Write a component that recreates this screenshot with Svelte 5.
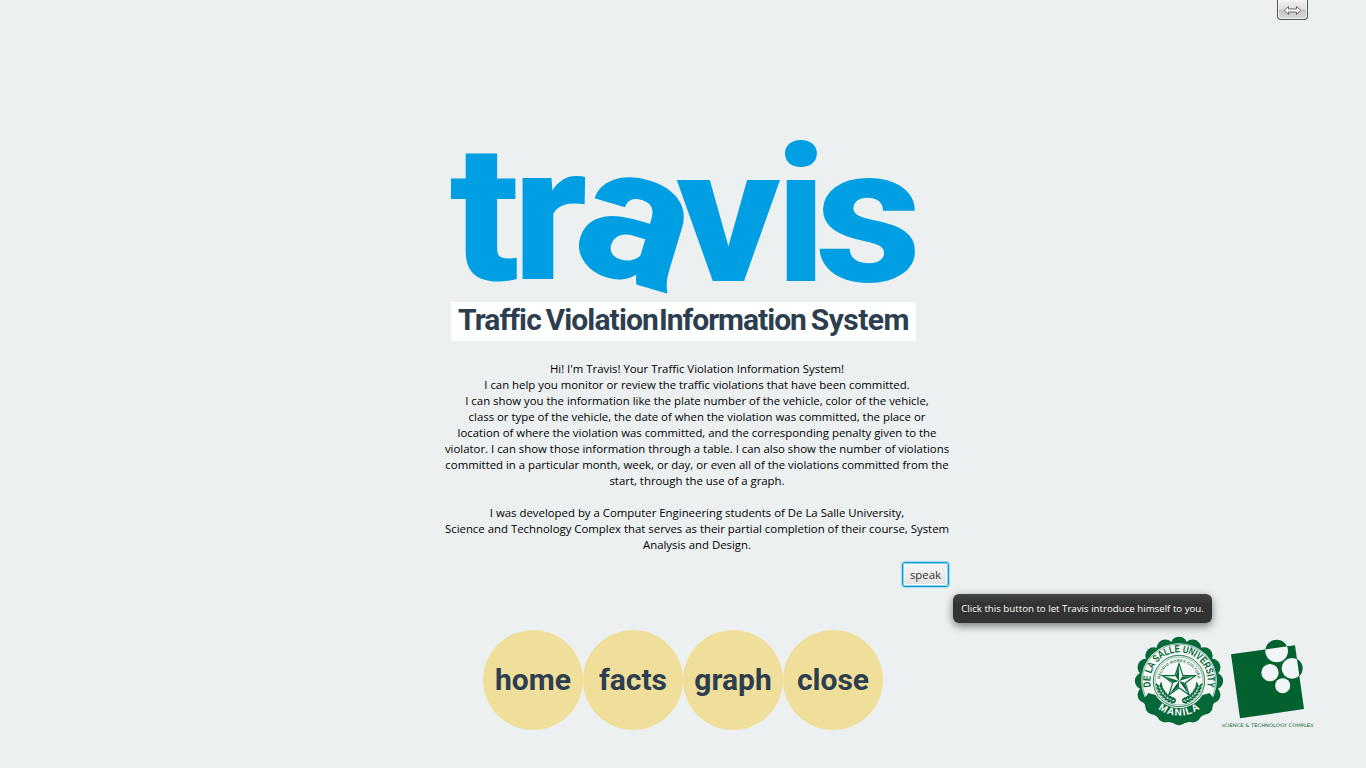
<script>
  const letters = [
    { ch: 't', t: 'translate(449.8 279.5) scale(1.07 1)' },
    { ch: 'r', t: 'translate(512.3 279) scale(1.05 1)' },
    { ch: 'a', t: 'translate(566.5 263.5) rotate(16.7) scale(1.08 1)' },
    { ch: 'v', t: 'translate(676 281) scale(1.07 1)' },
    { ch: 'i', t: 'translate(774.3 281) scale(1.05 1)' },
    { ch: 's', t: 'translate(815 281) scale(1.085 1)' }
  ];
  const title = [
    { word: 'Traffic', ls: -0.9, gap: 0 },
    { word: 'Violation', ls: -0.87, gap: 4.6 },
    { word: 'Information', ls: -1.02, gap: 1 },
    { word: 'System', ls: -0.5, gap: 4.8 }
  ];
  const lines = [
    "Hi! I'm Travis! Your Traffic Violation Information System!",
    'I can help you monitor or review the traffic violations that have been committed.',
    'I can show you the information like the plate number of the vehicle, color of the vehicle,',
    'class or type of the vehicle, the date of when the violation was committed, the place or',
    'location of where the violation was committed, and the corresponding penalty given to the',
    'violator. I can show those information through a table. I can also show the number of violations',
    'committed in a particular month, week, or day, or even all of the violations committed from the',
    'start, through the use of a graph.',
    '',
    'I was developed by a Computer Engineering students of De La Salle University,',
    'Science and Technology Complex that serves as their partial completion of their course, System',
    'Analysis and Design.'
  ];
  const nav = ['home', 'facts', 'graph', 'close'];
  const scallops = Array.from({ length: 16 }, (_, i) => {
    const a = (i * Math.PI) / 8;
    return { x: 107 * Math.cos(a), y: 107 * Math.sin(a) };
  });
  const pt = (r, deg) => {
    const a = (deg * Math.PI) / 180;
    return [r * Math.sin(a), -r * Math.cos(a)];
  };
  const starPoints = Array.from({ length: 10 }, (_, i) => pt(i % 2 ? 20 : 52, i * 36));
  const star = starPoints.map((p) => p.join(',')).join(' ');
  const facets = [0, 2, 4, 6, 8].map((i) =>
    ['0,0', starPoints[i].map((v) => v * 0.9).join(','), starPoints[(i + 9) % 10].map((v) => v * 0.85).join(',')].join(' ')
  );
  const leaves = [];
  for (const side of [-1, 1])
    for (let k = 0; k < 8; k++) {
      const d = side * (102 + k * 9);
      for (const [r, tilt] of [[66, 30], [56, -30]]) {
        const [x, y] = pt(r, d);
        leaves.push({ x, y, rot: d + side * tilt });
      }
    }
</script>

<div class="page">
  <header>
    <button class="resize" aria-label="Resize">
      <svg width="19" height="11" viewBox="0 0 19 11">
        <path d="M1.2 5.5 5.5 1.5V4h8V1.5L17.8 5.5 13.5 9.5V7h-8v2.5z" fill="#fff" stroke="#666" stroke-width="1" />
      </svg>
    </button>
  </header>

  <main>
    <svg class="logo" width="470" height="162" viewBox="449 136 470 162">
      {#each letters as l}
        <text class:slim={l.ch === 'i'} transform={l.t}>{l.ch}</text>
      {/each}
    </svg>
    <h1>
      {#each title as w}
        <span style="letter-spacing: {w.ls}px; margin-left: {w.gap}px">{w.word}</span>
      {/each}
    </h1>
    <section>
      {#each lines as line}
        <p>{line}</p>
      {/each}
      <div class="action">
        <button class="speak">speak</button>
        <div class="tip">Click this button to let Travis introduce himself to you.</div>
      </div>
    </section>
  </main>

  <footer>
    <nav>
      {#each nav as item}
        <button class="round">{item}</button>
      {/each}
    </nav>
    <div class="marks">
      <svg width="90" height="90" viewBox="-135 -135 270 270">
        <defs>
          <path id="ring" d="M-55.3 65.9A86 86 0 1 1 55.3 65.9" />
          <path id="motto" d="M-53.6 19.5A57 57 0 1 1 53.6 19.5" />
          <path id="city" d="M-82 64A104 104 0 0 0 82 64" />
        </defs>
        {#each scallops as s}
          <circle cx={s.x} cy={s.y} r="25.5" fill="#056839" />
        {/each}
        <circle r="116" fill="#056839" />
        <circle r="113.5" fill="#f3f7f5" />
        <circle r="110.5" fill="none" stroke="#056839" stroke-width="1.5" />
        <path d="M-92 36-70 42A82 82 0 0 0 70 42L92 36 109 60A122 122 0 0 1-109 60z" fill="#056839" />
        <circle r="77" fill="#f3f7f5" stroke="#056839" stroke-width="2.5" />
        <circle r="72" fill="#f3f7f5" stroke="#056839" stroke-width="1.2" />
        {#each leaves as l}
          <ellipse rx="3" ry="8" fill="#056839" transform="translate({l.x} {l.y}) rotate({l.rot + 90})" />
        {/each}
        <polygon points={star} fill="#f3f7f5" stroke="#056839" stroke-width="3.5" />
        {#each facets as f}
          <polygon points={f} fill="#056839" />
        {/each}
        <text class="ringtext"><textPath href="#ring" startOffset="50%" textLength="306" lengthAdjust="spacingAndGlyphs">DE LA SALLE UNIVERSITY</textPath></text>
        <text class="motto"><textPath href="#motto" startOffset="50%" textLength="166" lengthAdjust="spacing">RELIGIO MORES CULTURA</textPath></text>
        <text class="city"><textPath href="#city" startOffset="50%" textLength="134" lengthAdjust="spacing">MANILA</textPath></text>
      </svg>
      <svg width="96" height="96" viewBox="15 22 288 288">
        <defs>
          <clipPath id="tile"><path d="M48 74 240 47 267 238 75 266z" /></clipPath>
        </defs>
        <g fill="#03602f">
          <circle cx="185" cy="64" r="34" />
          <circle cx="231" cy="116" r="32" />
          <path d="M48 74 240 47 267 238 75 266z" />
        </g>
        <g fill="#f2f5f5" clip-path="url(#tile)">
          <circle cx="185" cy="64" r="34" />
          <circle cx="231" cy="116" r="31" />
          <circle cx="165" cy="129" r="26" />
          <circle cx="203" cy="168" r="22.5" />
        </g>
        <text class="complex" x="20" y="292" textLength="276" lengthAdjust="spacingAndGlyphs">sCIENCE &amp; TECHNOLOGY COMPLEX</text>
      </svg>
    </div>
  </footer>
</div>

<style>
  :global(body) { background: #ecf0f1; }
  .page {
    box-sizing: border-box; width: 1366px; height: 768px; overflow: hidden;
    display: flex; flex-direction: column; background: #ecf0f1; color: #000;
    font-family: "Open Sans", "Noto Sans", sans-serif;
  }
  button { font: inherit; margin: 0; padding: 0; border: 0; }
  header { display: flex; justify-content: flex-end; height: 20px; padding-right: 58px; }
  .resize {
    width: 31px; height: 20px; display: grid; place-items: center; padding-top: 1px;
    border: 1px solid #555; border-top: 0; border-radius: 0 0 4px 4px;
    background: linear-gradient(#efefef, #e0e0e0 45%, #c6c6c6 55%, #dadada);
    box-shadow: inset 0 0 0 1px #f4f4f4;
  }
  main { display: flex; flex-direction: column; margin-top: 116px; }
  .logo { display: block; margin-left: 449px; overflow: visible; }
  .logo text { font: 770 192px Roboto, sans-serif; fill: #009fe3; }
  .logo .slim { font-weight: 720; }
  h1 {
    margin: 4px 0 0 451px; width: 465px; height: 39px; background: #fff; color: #2c3e50;
    box-sizing: border-box; padding-left: 7px; font: 700 30px/35px Roboto, sans-serif;
    display: flex; white-space: nowrap;
  }
  section { width: 504px; margin: 20px 0 0 445px; text-align: center; font-size: 11.39px; }
  p { margin: 0; height: 16px; line-height: 16px; white-space: nowrap; display: flex; justify-content: center; }
  .action { position: relative; display: flex; justify-content: flex-end; margin-top: 9px; }
  .speak {
    width: 47px; height: 25px; border: 1.5px solid #039ed3; border-radius: 3px; color: #333;
    background: linear-gradient(#f6f6f6, #e2e2e2);
    box-shadow: 0 0 1px 1px #a5d9ec, inset 0 0 0 1px #8fd0e8, inset 0 0 0 2px #fafafa;
    line-height: 23px;
  }
  .tip {
    position: absolute; left: 508px; top: 32px; width: 259px; height: 29px; border-radius: 6px;
    background: linear-gradient(#434544, #323232 35%, #323232); color: #fff;
    font-size: 9.7px; line-height: 29px; white-space: nowrap; box-shadow: 0 3px 8px rgba(0, 0, 0, 0.5);
  }
  footer { display: grid; grid-template-columns: 1fr auto 1fr; margin-top: 43px; }
  nav { grid-column: 2; display: flex; }
  .round {
    width: 100px; height: 100px; border-radius: 50%; background: #f0df9a; color: #2c3e50;
    font: 700 30px/100px Roboto, sans-serif;
  }
  .marks { display: flex; justify-self: end; align-items: flex-start; padding: 6px 50px 0 0; }
  .marks svg { display: block; }
  .marks svg + svg { margin: 1px 0 0 -4px; }
  .ringtext { font: 700 31px "Liberation Sans", sans-serif; fill: #056839; text-anchor: middle; }
  .motto { font: 700 11.5px "Liberation Sans", sans-serif; fill: #2d7550; text-anchor: middle; }
  .city { font: 700 30px "Liberation Sans", sans-serif; fill: #fff; text-anchor: middle; }
  .complex { font: 400 14px "DejaVu Sans", sans-serif; fill: #1d6b43; }
</style>
